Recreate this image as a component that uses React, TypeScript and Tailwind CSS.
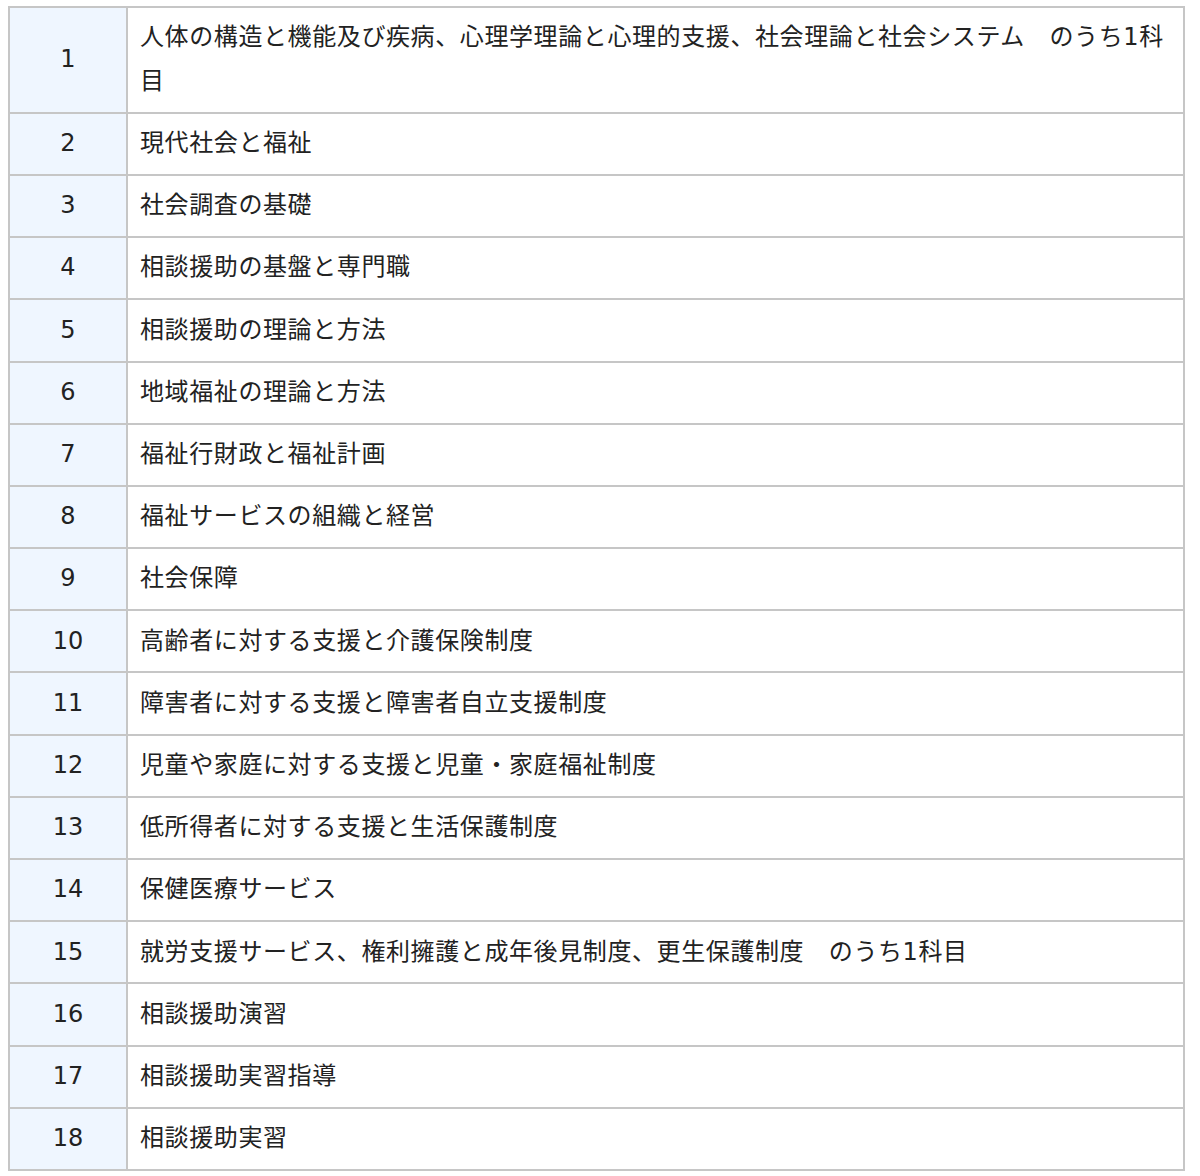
const subjects: string[] = [
  '人体の構造と機能及び疾病、心理学理論と心理的支援、社会理論と社会システム　のうち1科目',
  '現代社会と福祉',
  '社会調査の基礎',
  '相談援助の基盤と専門職',
  '相談援助の理論と方法',
  '地域福祉の理論と方法',
  '福祉行財政と福祉計画',
  '福祉サービスの組織と経営',
  '社会保障',
  '高齢者に対する支援と介護保険制度',
  '障害者に対する支援と障害者自立支援制度',
  '児童や家庭に対する支援と児童・家庭福祉制度',
  '低所得者に対する支援と生活保護制度',
  '保健医療サービス',
  '就労支援サービス、権利擁護と成年後見制度、更生保護制度　のうち1科目',
  '相談援助演習',
  '相談援助実習指導',
  '相談援助実習',
]

export default function App() {
  return (
    <div className="bg-white min-h-screen pt-[6px] pl-[8px] pr-[15px] font-['DejaVu_Sans','Noto_Sans_CJK_JP',sans-serif] text-[24px] leading-[43.6px] text-[#222]">
      <table className="w-[1177px] border-collapse border-2 border-[#c6c6c6]">
        <tbody>
          {subjects.map((s, i) => (
            <tr key={i}>
              <td className="w-[118px] border-2 border-[#c6c6c6] bg-[#eff6ff] text-center align-middle py-[8.3px]">
                {i + 1}
              </td>
              <td className="border-2 border-[#c6c6c6] pl-[12px] pr-[10px] py-[8.3px] align-middle tracking-[0.6px]">
                {s}
              </td>
            </tr>
          ))}
        </tbody>
      </table>
    </div>
  )
}
